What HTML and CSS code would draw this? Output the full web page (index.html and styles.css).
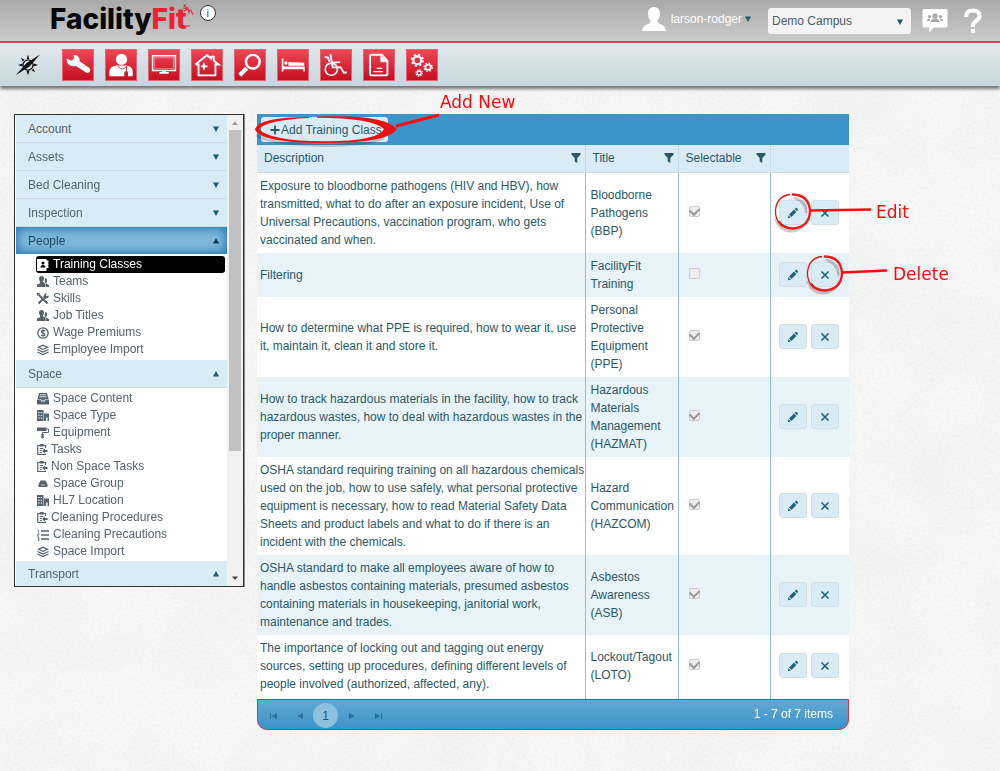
FILE: index.html
```html
<!DOCTYPE html>
<html lang="en">
<head>
<meta charset="utf-8">
<title>FacilityFit - Training Classes</title>
<link rel="stylesheet" href="styles.css">
</head>
<body>
<svg class="texture" aria-hidden="true">
  <filter id="grain" x="0" y="0" width="100%" height="100%">
    <feTurbulence type="fractalNoise" baseFrequency="0.4" numOctaves="3" seed="7"/>
    <feColorMatrix values="0 0 0 0 .5  0 0 0 0 .5  0 0 0 0 .5  .2 0 0 0 -.06"/>
  </filter>
  <filter id="clouds" x="0" y="0" width="100%" height="100%">
    <feTurbulence type="fractalNoise" baseFrequency="0.012" numOctaves="3" seed="3"/>
    <feColorMatrix values="0 0 0 0 .5  0 0 0 0 .5  0 0 0 0 .5  .12 0 0 0 -.04"/>
  </filter>
  <rect width="100%" height="100%" filter="url(#clouds)"/>
  <rect width="100%" height="100%" filter="url(#grain)"/>
</svg>
<svg class="defs" aria-hidden="true">
  <defs>
    <symbol id="pencil" viewBox="0 0 12 12"><path fill="currentColor" d="M.8 11.200l.7-3 2.300 2.300zM2.100 7.500l4.900-4.900 2.400 2.400-4.900 4.900zM7.700 2l.9-.9q.6-.5 1.300.1l.9.9q.5.600 0 1.200l-.700.900z"/></symbol>
    <symbol id="cross" viewBox="0 0 12 12"><path fill="none" stroke="currentColor" stroke-width="1.600" d="M2.500 2.500l7 7M9.500 2.500l-7 7"/></symbol>
    <symbol id="funnel" viewBox="0 0 10 10"><path fill="currentColor" d="M.5 0h9v1.500L6.300 5v5L3.700 8.500V5L.5 1.500z"/></symbol>
    <symbol id="down" viewBox="0 0 8 8"><path fill="currentColor" d="M1 1.500h6L4 7z"/></symbol>
    <symbol id="up" viewBox="0 0 8 8"><path fill="currentColor" d="M1 6.500h6L4 1z"/></symbol>
    <symbol id="people" viewBox="0 0 12 12"><path fill="currentColor" d="M4.500 0q2.500 0 2.500 2.700 0 1.600-1 2.600v1l2.200 1.200V11H0V8.500l3-1.200v-2Q2 4.300 2 2.700 2 0 4.500 0z"/><path fill="currentColor" d="M8 2q2.200.2 2 3 0 1-.7 1.700v1L12 9v2H8.600V7l-1.100-.7Q8.200 4.500 8 2z"/></symbol>
    <symbol id="badge" viewBox="0 0 12 12"><path fill="#fff" d="M0 0h9.500v1.500h2v2h-.7v.8h.7v2h-.7v.8h.7v2h-2V12H0z"/><circle cx="6" cy="4" r="1.500"/><path d="M3.500 8.500q0-2.500 2.500-2.500t2.500 2.500z"/></symbol>
    <symbol id="tools" viewBox="0 0 12 12"><path fill="none" stroke="currentColor" stroke-width="2" d="M1.500 1.500l9 9M1.500 10.500l5-5"/><path fill="currentColor" d="M6 4l2-3.500 2-.2-1.200 2 1 1 1.900-1-.2 2.200L8 6.200zM0 0h3L0 3z"/></symbol>
    <symbol id="dollar" viewBox="0 0 12 12"><circle cx="6" cy="6" r="5.200" fill="none" stroke="currentColor" stroke-width="1.300"/><path fill="none" stroke="currentColor" stroke-width="1.200" d="M8 4.200Q7.500 3.300 6 3.300T4.200 4.600Q4.200 5.700 6 6t1.900 1.400Q7.900 8.700 6 8.700T4 7.800M6 2.300v7.500"/></symbol>
    <symbol id="layers" viewBox="0 0 12 12"><path fill="currentColor" fill-rule="evenodd" d="M6 .5l6 2.800-6 2.800L0 3.300zM6 1.900L3 3.300l3 1.400 3-1.400z"/><path fill="none" stroke="currentColor" stroke-width="1.200" d="M.5 5.500L6 8.100l5.500-2.600M.5 8L6 10.600 11.500 8"/></symbol>
    <symbol id="tray" viewBox="0 0 12 12"><path fill="currentColor" d="M2 0h8l1.500 6H8l-.5 1.500h-3L4 6H.5zM0 6.500h3.500L4 8.500h4l.5-2H12v5H0z"/><path stroke="#fff" stroke-width=".8" d="M2.800 1.800h6.400M2.500 3.800h7"/></symbol>
    <symbol id="building" viewBox="0 0 12 12"><path fill="currentColor" fill-rule="evenodd" d="M0 0h6.500v11H0zM1.200 2v1h1.400V2zm2.500 0v1h1.400V2zM1.200 4.700v1h1.400v-1zm2.500 0v1h1.400v-1zM1.200 7.400v1h1.400v-1zm2.500 0v1h1.400v-1zM7 3.500h5V11h-1.500V7.500H9V11H7z"/></symbol>
    <symbol id="roller" viewBox="0 0 12 12"><path fill="currentColor" d="M0 .5h9.500V4H0z"/><path fill="none" stroke="currentColor" d="M9.500 2h2v3.500h-6V8"/><path fill="currentColor" d="M4.300 7h2.400v4.300H4.300z"/></symbol>
    <symbol id="task" viewBox="0 0 12 12"><path fill="none" stroke="currentColor" stroke-width="1.200" d="M8.500 4V1.500H.800v9h7.700v-1M2.800 4.500h3.500M2.800 6.500h2M2.800 8.500h2"/><path fill="currentColor" d="M2.700 0h4v2.400h-4zM5 7l3-2.500v1.600h2.600v1.800H8v1.600z"/></symbol>
    <symbol id="group" viewBox="0 0 12 12"><path fill="currentColor" d="M1.500 6.500l2-4h5l2 4V9h-9z"/><path stroke="#fff" stroke-width=".7" d="M4 7h4"/></symbol>
    <symbol id="list" viewBox="0 0 12 12"><path stroke="currentColor" stroke-width="1.300" d="M4 2h8M4 6h8M4 10h8"/><path fill="none" stroke="currentColor" stroke-width=".8" d="M.5.800h1v2.700M.5 4.800h1.500v1.100H.600v1.300H2M.5 8.700h1.500v1.400h-1 1v1.500H.4"/></symbol>
    <symbol id="ring" viewBox="0 0 44 44"><path fill="none" stroke="#000" stroke-opacity=".2" stroke-width="3" stroke-linecap="round" d="M24 8q11 4 11.500 14M5 30q4 10.500 14 11 9 0 14-6"/><path fill="none" stroke="#e01414" stroke-width="1.300" d="M19 4.500Q6 6 4.500 20 4 36 20 38.500"/><path fill="none" stroke="#f01818" stroke-width="2.400" stroke-linecap="round" d="M22 4.500Q38 5 39 21 38.500 37 22 38.500 12 38 8 32"/></symbol>
  </defs>
</svg>

<header class="top">
  <h1 class="logo">Facility<span>Fit</span><svg class="flourish" viewBox="0 0 12 24"><path fill="none" stroke="#e8243a" stroke-width="1.200" d="M4 .5q-4 1 0 2.500t0 3l-2 1M1 4l5 1 1 3q1-4 2.500-.5T11 10"/><path stroke="#e8243a" d="M4 22h4"/></svg></h1>
  <button class="info" aria-label="Information">i</button>
  <div class="account">
    <button class="user">
      <svg width="26" height="26" viewBox="0 0 26 26"><path fill="#fff" d="M13 1q6 0 6 7 0 4-2.500 6.500 0 2.500 2 3.200Q24.500 19.500 25 25H1q.5-5.500 6.500-7.300 2-.7 2-3.200Q7 12 7 8q0-7 6-7z"/></svg>
      <span>larson-rodger</span>
      <svg class="tri" width="8" height="8"><use href="#down"/></svg>
    </button>
    <div class="campus">
      <select aria-label="Campus"><option>Demo Campus</option></select>
      <svg class="tri" width="8" height="8"><use href="#down"/></svg>
    </div>
    <button class="plain" aria-label="Community"><svg width="26" height="26" viewBox="0 0 26 26"><path fill="#fff" d="M2 1h22q1.500 0 1.500 1.500v15.500q0 1.500-1.500 1.500H12L7 24.500v-5H2Q.5 19.500.5 18V2.500Q.5 1 2 1z"/><g fill="#aaa"><circle cx="13" cy="8" r="2.600"/><path d="M8.500 14q0-3.500 4.500-3.500t4.500 3.500z"/><circle cx="7.500" cy="8.500" r="1.600"/><path d="M5 13q0-2.500 3.300-2.500L7.500 13z"/><circle cx="18.500" cy="8.500" r="1.600"/><path d="M21 13q0-2.500-3.300-2.500l.8 2.500z"/></g></svg></button>
    <button class="plain" aria-label="Help"><svg width="20" height="26" viewBox="0 0 20 26"><path fill="none" stroke="#fff" stroke-width="4" d="M3 9q.2-6.500 7-6.500 6.300 0 6.500 5.200 0 3-3.500 5.300-3 2-3 5v1"/><path fill="#fff" d="M8 21h4v4H8z"/></svg></button>
  </div>
</header>

<nav class="modules" aria-label="Modules">
  <a class="compass" href="#" aria-label="Home"><svg width="26" height="24" viewBox="0 0 26 24"><circle cx="13" cy="12" r="5" fill="none" stroke="#111" stroke-width="1.200"/><path fill="#111" d="M25 1.500L14.500 13.500 1 22l10.500-12zM13 1.500l1.500 5h-3zM13 22.500l1.500-5h-3zM3 12l4.500-1.500v3zM23 12l-4.500-1.500v3zM6 5l3.500 1.500L7.500 8.500zM20 19l-1.500-3.500-2 2z"/></svg></a>
  <a href="#" aria-label="Maintenance"><svg viewBox="0 0 32 32"><path fill="#fff" d="M4 9l5 2.500L12 9l-1-3.500q4-.5 6 2.500 1.200 2 .6 4l10.400 7q2 2 .5 4.300-1.800 2-4 .7L14 17Q7.500 18 5 14 3.500 11.500 4 9z"/></svg></a>
  <a href="#" aria-label="People"><svg viewBox="0 0 32 32"><circle cx="16.500" cy="10" r="6" fill="#fff"/><path fill="#fff" d="M3.500 28v-5q.5-5.500 7.500-6.500h10.500q7 1 7 6.500v5h-5v-4q-2-3-4 0v4z"/><path fill="none" stroke="#d9243a" d="M13 17.500q5 6 9-.5v6"/></svg></a>
  <a href="#" aria-label="Monitor"><svg viewBox="0 0 32 32"><path fill="none" stroke="#fff" stroke-width="1.600" d="M3.800 6.200h24.400v15.600H3.800z"/><path fill="none" stroke="#fff" stroke-width="1" d="M6 8.300h20v11.500H6z" opacity=".4"/><path fill="#fff" d="M14 22h4v1.500h3v1.800H11v-1.800h3z"/></svg></a>
  <a href="#" aria-label="Facility"><svg viewBox="0 0 32 32"><path fill="none" stroke="#fff" stroke-width="2" d="M3.500 15.500L16 5.500l4.500 3.700V7h2.800v4.500l5.200 4H25v11.500H7V15.500H4M12.700 14v7M9.500 17.500h7"/></svg></a>
  <a href="#" aria-label="Search"><svg viewBox="0 0 32 32"><circle cx="19" cy="12.500" r="7.300" fill="none" stroke="#fff" stroke-width="2.600"/><path stroke="#fff" stroke-width="4.500" d="M12.500 19.500L5 27"/></svg></a>
  <a href="#" aria-label="Beds"><svg viewBox="0 0 32 32"><path fill="#fff" d="M4 9h1.800v8.500H28.500V23H27v-2.500H5.800V23H4zM11 12.700L28 13.700v3H11z"/><circle cx="8.500" cy="13.800" r="1.800" fill="#fff"/></svg></a>
  <a href="#" aria-label="Transport"><svg viewBox="0 0 32 32"><circle cx="11" cy="20.500" r="6.500" fill="none" stroke="#fff" stroke-width="1.700"/><path fill="none" stroke="#fff" stroke-width="2" d="M10 4.500l2.500 14h8.500l3.500 6 3-1M12.500 13.500l8-.500M4 7.500l3.500.5 1.500 4.500"/></svg></a>
  <a href="#" aria-label="Reports"><svg viewBox="0 0 32 32"><path fill="none" stroke="#fff" stroke-width="2" d="M8.500 5h10.500l6 6.500v13.500q0 2-2 2H8.500q-2 0-2-2V7q0-2 2-2z"/><path fill="#fff" d="M17.500 5l7.500 8h-7.500z"/><path stroke="#fff" stroke-width="1.400" d="M13.500 19.500h6M10 23h10"/></svg></a>
  <a href="#" aria-label="Settings"><svg viewBox="0 0 32 32"><g fill="none" stroke="#fff"><circle cx="11" cy="11" r="4.200" stroke-width="2.300"/><circle cx="11" cy="11" r="6" stroke-width="2" stroke-dasharray="2.360 2.360"/><circle cx="22.500" cy="18.500" r="2.800" stroke-width="1.800"/><circle cx="22.500" cy="18.500" r="4.300" stroke-width="1.600" stroke-dasharray="1.690 1.690"/><circle cx="13" cy="24.500" r="2.100" stroke-width="1.400"/><circle cx="13" cy="24.500" r="3.400" stroke-width="1.300" stroke-dasharray="1.330 1.330"/></g></svg></a>
</nav>

<div class="page">
  <aside class="side">
    <div class="menu">
      <button class="sect">Account<svg class="tri"><use href="#down"/></svg></button>
      <button class="sect">Assets<svg class="tri"><use href="#down"/></svg></button>
      <button class="sect">Bed Cleaning<svg class="tri"><use href="#down"/></svg></button>
      <button class="sect">Inspection<svg class="tri"><use href="#down"/></svg></button>
      <button class="sect open" aria-expanded="true">People<svg class="tri"><use href="#up"/></svg></button>
      <ul>
        <li><a class="current" href="#"><svg><use href="#badge"/></svg>Training Classes</a></li>
        <li><a href="#"><svg><use href="#people"/></svg>Teams</a></li>
        <li><a href="#"><svg><use href="#tools"/></svg>Skills</a></li>
        <li><a href="#"><svg><use href="#people"/></svg>Job Titles</a></li>
        <li><a href="#"><svg><use href="#dollar"/></svg>Wage Premiums</a></li>
        <li><a href="#"><svg><use href="#layers"/></svg>Employee Import</a></li>
      </ul>
      <button class="sect" aria-expanded="true">Space<svg class="tri"><use href="#up"/></svg></button>
      <ul class="roomy">
        <li><a href="#"><svg><use href="#tray"/></svg>Space Content</a></li>
        <li><a href="#"><svg><use href="#building"/></svg>Space Type</a></li>
        <li><a href="#"><svg><use href="#roller"/></svg>Equipment</a></li>
        <li><a class="tight" href="#"><svg><use href="#task"/></svg>Tasks</a></li>
        <li><a class="tight" href="#"><svg><use href="#task"/></svg>Non Space Tasks</a></li>
        <li><a href="#"><svg><use href="#group"/></svg>Space Group</a></li>
        <li><a href="#"><svg><use href="#building"/></svg>HL7 Location</a></li>
        <li><a class="tight" href="#"><svg><use href="#task"/></svg>Cleaning Procedures</a></li>
        <li><a href="#"><svg><use href="#list"/></svg>Cleaning Precautions</a></li>
        <li><a href="#"><svg><use href="#layers"/></svg>Space Import</a></li>
      </ul>
      <button class="sect last" aria-expanded="true">Transport<svg class="tri"><use href="#up"/></svg></button>
    </div>
    <div class="scrollbar" aria-hidden="true">
      <svg width="8" height="8" viewBox="0 0 8 8"><path fill="#999" d="M1 6h6L4 2.500z"/></svg>
      <div class="track"><div class="thumb"></div></div>
      <svg width="8" height="8" viewBox="0 0 8 8"><path fill="#444" d="M1 2.500h6L4 6z"/></svg>
    </div>
  </aside>

  <main class="grid">
    <div class="toolbar"><button class="add"><svg width="10" height="10" viewBox="0 0 10 10"><path stroke="currentColor" stroke-width="1.800" d="M5 .5v9M.5 5h9"/></svg>Add Training Class</button></div>
    <table>
      <colgroup><col><col class="c-title"><col class="c-select"><col class="c-tools"></colgroup>
      <thead><tr>
        <th><div>Description<svg><use href="#funnel"/></svg></div></th>
        <th><div>Title<svg><use href="#funnel"/></svg></div></th>
        <th><div>Selectable<svg><use href="#funnel"/></svg></div></th>
        <th></th>
      </tr></thead>
      <tbody>
        <tr><td>Exposure to bloodborne pathogens (HIV and HBV), how<br>transmitted, what to do after an exposure incident, Use of<br>Universal Precautions, vaccination program, who gets<br>vaccinated and when.</td><td>Bloodborne Pathogens (BBP)</td><td><input type="checkbox" aria-label="Selectable" checked disabled></td><td><div class="tools"><button aria-label="Edit"><svg><use href="#pencil"/></svg></button><button aria-label="Delete"><svg><use href="#cross"/></svg></button></div></td></tr>
        <tr><td>Filtering</td><td>FacilityFit Training</td><td><input type="checkbox" aria-label="Selectable" disabled></td><td><div class="tools"><button aria-label="Edit"><svg><use href="#pencil"/></svg></button><button aria-label="Delete"><svg><use href="#cross"/></svg></button></div></td></tr>
        <tr><td>How to determine what PPE is required, how to wear it, use<br>it, maintain it, clean it and store it.</td><td>Personal Protective Equipment (PPE)</td><td><input type="checkbox" aria-label="Selectable" checked disabled></td><td><div class="tools"><button aria-label="Edit"><svg><use href="#pencil"/></svg></button><button aria-label="Delete"><svg><use href="#cross"/></svg></button></div></td></tr>
        <tr><td>How to track hazardous materials in the facility, how to track<br>hazardous wastes, how to deal with hazardous wastes in the<br>proper manner.</td><td>Hazardous Materials Management (HAZMAT)</td><td><input type="checkbox" aria-label="Selectable" checked disabled></td><td><div class="tools"><button aria-label="Edit"><svg><use href="#pencil"/></svg></button><button aria-label="Delete"><svg><use href="#cross"/></svg></button></div></td></tr>
        <tr><td>OSHA standard requiring training on all hazardous chemicals<br>used on the job, how to use safely, what personal protective<br>equipment is necessary, how to read Material Safety Data<br>Sheets and product labels and what to do if there is an<br>incident with the chemicals.</td><td>Hazard Communication (HAZCOM)</td><td><input type="checkbox" aria-label="Selectable" checked disabled></td><td><div class="tools"><button aria-label="Edit"><svg><use href="#pencil"/></svg></button><button aria-label="Delete"><svg><use href="#cross"/></svg></button></div></td></tr>
        <tr><td>OSHA standard to make all employees aware of how to<br>handle asbestos containing materials, presumed asbestos<br>containing materials in housekeeping, janitorial work,<br>maintenance and trades.</td><td>Asbestos Awareness (ASB)</td><td><input type="checkbox" aria-label="Selectable" checked disabled></td><td><div class="tools"><button aria-label="Edit"><svg><use href="#pencil"/></svg></button><button aria-label="Delete"><svg><use href="#cross"/></svg></button></div></td></tr>
        <tr><td>The importance of locking out and tagging out energy<br>sources, setting up procedures, defining different levels of<br>people involved (authorized, affected, any).</td><td>Lockout/Tagout (LOTO)</td><td><input type="checkbox" aria-label="Selectable" checked disabled></td><td><div class="tools"><button aria-label="Edit"><svg><use href="#pencil"/></svg></button><button aria-label="Delete"><svg><use href="#cross"/></svg></button></div></td></tr>
      </tbody>
    </table>
    <div class="pager">
      <button aria-label="First page"><svg viewBox="0 0 8 8"><path fill="currentColor" d="M0 1h1v6H0zM7 1v6L1.500 4z"/></svg></button>
      <button aria-label="Previous page"><svg viewBox="0 0 8 8"><path fill="currentColor" d="M7 1v6L1 4z"/></svg></button>
      <button class="num" aria-current="page">1</button>
      <button aria-label="Next page"><svg viewBox="0 0 8 8"><path fill="currentColor" d="M1 1v6l6-3z"/></svg></button>
      <button aria-label="Last page"><svg viewBox="0 0 8 8"><path fill="currentColor" d="M7 1h1v6H7zM1 1v6l5.500-3z"/></svg></button>
      <span class="count">1 - 7 of 7 items</span>
    </div>

    <div class="note note-add">
      <svg width="190" height="50" viewBox="0 0 190 50"><path fill="none" stroke="#000" stroke-opacity=".16" stroke-width="3" stroke-linecap="round" d="M4 38Q20 46.500 72 47.500 112 47 130 40"/><path fill="#ee1010" fill-rule="evenodd" d="M64 18.500Q132 16 144 31 136 45 72 45 6 45 2 31 6 19 56 19L56 20Q14 22 6 31 16 43 72 43.300 126 43 131 31 120 20 64 19.800z"/><path stroke="#ff0a0a" stroke-width="3" d="M143 28L186 17"/></svg>
      <span>Add New</span>
    </div>
    <div class="note note-edit">
      <svg width="102" height="44" viewBox="0 0 102 44"><use href="#ring" width="44" height="44"/><path stroke="#ff0a0a" stroke-width="2.600" d="M40 20.500l60-1"/></svg>
      <span>Edit</span>
    </div>
    <div class="note note-delete">
      <svg width="86" height="44" viewBox="0 0 86 44"><use href="#ring" width="44" height="44"/><path stroke="#ff0a0a" stroke-width="2.600" d="M39 20.500l45-2"/></svg>
      <span>Delete</span>
    </div>
  </main>
</div>
</body>
</html>
```
FILE: styles.css
```css
* { box-sizing: border-box; }
body {
  margin: 0;
  min-height: 100vh;
  background: #f8f8f8;
  font: 12px/18px "Liberation Sans", Arial, sans-serif;
  color: #2a5868;
}
button, select { font: inherit; color: inherit; border: 0; padding: 0; background: none; }
a { color: inherit; text-decoration: none; }
svg { flex: none; }
.texture { position: fixed; inset: 0; width: 100%; height: 100%; z-index: -1; }
.defs { position: absolute; width: 0; height: 0; }
.tri { width: 8px; height: 8px; color: #1f5a72; }

.top {
  display: flex;
  align-items: flex-start;
  height: 43px;
  padding: 0 17px 0 50px;
  background: linear-gradient(#a9a9a9, #cbcbcb);
  border-bottom: 2px solid #e93b5e;
}
.logo { display: flex; margin: 0; font: 800 28px/38px Inter, sans-serif; color: #060606; }
.logo span { color: #ee2034; }
.flourish { width: 12px; height: 24px; margin-top: 4px; margin-left: -5px; }
.info {
  width: 16px; height: 16px; margin: 5px 0 0 6px;
  border: 1px solid #333; border-radius: 50%; background: #fff;
  font-size: 11px; line-height: 14px; color: #4a3bd0;
}
.account { display: flex; align-items: flex-start; margin: 8px 0 0 auto; }
.user { display: flex; align-items: center; color: #fff; margin: -2px 16px 0 0; height: 26px; }
.user span { margin: 0 2px 0 4px; }
.campus { position: relative; margin-right: 11px; }
.campus select {
  display: block; width: 143px; height: 26px; padding: 0 4px;
  appearance: none; background: #f3f3f3; border-radius: 3px; color: #4d5c68;
}
.campus .tri { position: absolute; right: 7px; top: 10px; }
.plain { display: flex; }
.plain + .plain { margin-left: 15px; }

.modules {
  display: flex;
  align-items: center;
  gap: 11px;
  height: 43px;
  padding: 0 15px;
  background: linear-gradient(#e1e9ec, #c6d6dc);
  box-shadow: 0 3px 3px #777;
}
.modules a {
  display: block; width: 32px; height: 32px;
  background: linear-gradient(#ee4656, #c60f20);
  border: 1px solid #e06673;
}
.modules a svg { display: block; width: 30px; height: 30px; }
.modules .compass { width: 36px; height: 24px; border: 0; background: none; }
.modules .compass svg { width: 26px; height: 24px; }

.page { display: flex; align-items: flex-start; gap: 13px; padding: 28px 151px 40px 14px; }

.side {
  display: flex;
  width: 230px;
  border: 1px solid #333;
  background: #fff;
  box-shadow: 1px 0 0 #888;
  color: #56636d;
}
.menu { flex: 1; padding-left: 1px; }
.sect {
  display: flex; align-items: center; justify-content: space-between;
  width: 100%; height: 28px; padding: 0 7px 0 12px;
  background: #d9ebf4; border-bottom: 1px solid #d3dbe0;
}
.open {
  height: 27px; border: 0; color: #134b63;
  background: #7fb8da; box-shadow: inset 0 0 10px 2px #2678b2;
}
.open .tri { color: #063c50; }
.last { height: 25px; border: 0; }
.menu ul { list-style: none; margin: 0; padding: 2px 2px 2px 20px; }
.menu ul.roomy { padding: 2px 2px 1px 20px; }
.menu li a { display: flex; align-items: center; gap: 4px; height: 17px; padding-left: 1px; line-height: 17px; }
.menu li svg { width: 12px; height: 12px; }
.menu li .tight { gap: 2px; }
.menu .current { background: #000; color: #fff; border-radius: 3px; }
.scrollbar {
  display: flex; flex-direction: column; align-items: center;
  width: 16px; padding: 4px 1px; background: #f1f1f1;
}
.track { flex: 1; width: 12px; margin: 3px 0 4px; }
.thumb { height: 73%; background: #c1c1c1; }

.grid { position: relative; flex: 1; min-width: 0; }
.toolbar { height: 31px; padding: 3px 4px; background: #3d94ca; }
.add {
  display: flex; align-items: center; gap: 1px;
  height: 25px; padding: 0 6px 0 9px; border-radius: 3px; background: #d9ebf4;
}
table { width: 100%; border-collapse: collapse; table-layout: fixed; background: #fff; }
.c-title { width: 93px; }
.c-select { width: 92px; }
.c-tools { width: 79px; }
th {
  height: 27px; padding: 0 4px 0 7px; font-weight: normal; text-align: left;
  background: #d9ebf4; border-bottom: 1px solid #d0dce2;
}
th + th { border-left: 1px solid #ccd9e0; }
th div { display: flex; align-items: center; justify-content: space-between; }
th svg { width: 10px; height: 10px; }
td { padding: 4px 0 4px 5px; vertical-align: middle; }
td:first-child { padding-left: 3px; white-space: nowrap; }
td + td { border-left: 1px solid #8fc0d2; }
tbody tr:nth-child(even) { background: #e8f2f9; }
tbody tr:last-child td { padding-bottom: 6px; }
td input {
  display: flex; align-items: flex-start; justify-content: center; appearance: none;
  width: 11px; height: 11px; margin: 0 0 2px 5px;
  border: 1px solid #ccc; border-radius: 2px; background: #eee;
}
td input:checked::before {
  content: ""; width: 8px; height: 5px;
  border-left: 2px solid #999; border-bottom: 2px solid #999; transform: rotate(-45deg);
}
.tools { display: flex; gap: 4px; margin-left: 3px; }
.tools button {
  display: flex; align-items: center; justify-content: center;
  width: 28px; height: 25px; border: 1px solid #d2dee4; border-radius: 3px;
  background: #d9ebf4; color: #24607a;
}
.tools svg { width: 12px; height: 12px; }

.pager {
  display: flex; align-items: center; gap: 1px;
  height: 31px; padding: 3px 15px 0 3px;
  background: linear-gradient(#62a9d4, #3c92c8);
  border: 1px solid #cf3450; border-radius: 0 0 10px 10px;
}
.pager button { display: flex; align-items: center; justify-content: center; width: 25px; height: 25px; color: #28709a; }
.pager svg { width: 8px; height: 8px; }
.pager .num { border-radius: 50%; background: #8cc0df; color: #24566e; }
.count { margin-left: auto; padding-bottom: 3px; color: #fff; }

.note { position: absolute; display: flex; pointer-events: none; color: #f40d0d; font: 17px/20px "DejaVu Sans", Verdana, sans-serif; white-space: nowrap; }
.note-add { left: -4px; top: -16px; }
.note-add span { position: absolute; left: 187px; top: -6px; }
.note-edit { left: 514px; top: 76px; align-items: center; gap: 3px; }
.note-delete { left: 546px; top: 138px; align-items: center; gap: 4px; }
```
